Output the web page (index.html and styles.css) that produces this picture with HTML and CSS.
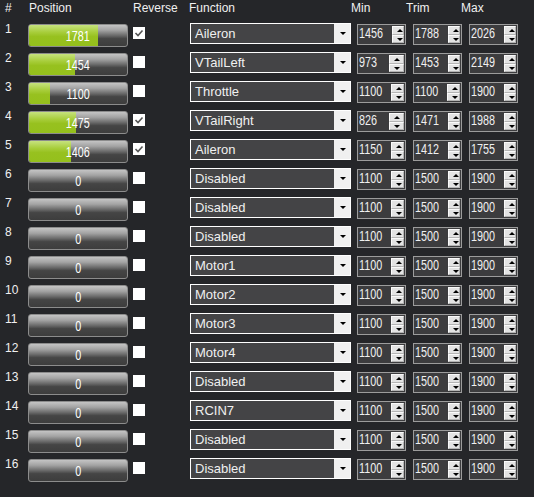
FILE: index.html
```html
<!DOCTYPE html>
<html lang="en">
<head>
    <meta charset="UTF-8">
    <title>Servo Output</title>
    <link rel="stylesheet" href="styles.css">
</head>
<body>
    <div class="panel">
        <div class="head">
            <span class="c-num">#</span>
            <span class="c-pos">Position</span>
            <span class="c-rev">Reverse</span>
            <span class="c-fn">Function</span>
            <span class="c-min">Min</span>
            <span class="c-trim">Trim</span>
            <span class="c-max">Max</span>
        </div>

        <div class="row">
            <span class="num">1</span>
            <div class="bar"><div class="fill" style="width: 70.1%"></div><span class="val"><b>1781</b></span></div>
            <span class="check on"></span>
            <div class="combo"><span class="text">Aileron</span><span class="drop"></span></div>
            <div class="spin"><span class="text"><b>1456</b></span><span class="btns"><i class="up"></i><i class="dn"></i></span></div>
            <div class="spin"><span class="text"><b>1788</b></span><span class="btns"><i class="up"></i><i class="dn"></i></span></div>
            <div class="spin"><span class="text"><b>2026</b></span><span class="btns"><i class="up"></i><i class="dn"></i></span></div>
        </div>
        <div class="row">
            <span class="num">2</span>
            <div class="bar"><div class="fill" style="width: 46.7%"></div><span class="val"><b>1454</b></span></div>
            <span class="check"></span>
            <div class="combo"><span class="text">VTailLeft</span><span class="drop"></span></div>
            <div class="spin"><span class="text"><b>973</b></span><span class="btns"><i class="up"></i><i class="dn"></i></span></div>
            <div class="spin"><span class="text"><b>1453</b></span><span class="btns"><i class="up"></i><i class="dn"></i></span></div>
            <div class="spin"><span class="text"><b>2149</b></span><span class="btns"><i class="up"></i><i class="dn"></i></span></div>
        </div>
        <div class="row">
            <span class="num">3</span>
            <div class="bar"><div class="fill" style="width: 21.4%"></div><span class="val"><b>1100</b></span></div>
            <span class="check"></span>
            <div class="combo"><span class="text">Throttle</span><span class="drop"></span></div>
            <div class="spin"><span class="text"><b>1100</b></span><span class="btns"><i class="up"></i><i class="dn"></i></span></div>
            <div class="spin"><span class="text"><b>1100</b></span><span class="btns"><i class="up"></i><i class="dn"></i></span></div>
            <div class="spin"><span class="text"><b>1900</b></span><span class="btns"><i class="up"></i><i class="dn"></i></span></div>
        </div>
        <div class="row">
            <span class="num">4</span>
            <div class="bar"><div class="fill" style="width: 48.2%"></div><span class="val"><b>1475</b></span></div>
            <span class="check on"></span>
            <div class="combo"><span class="text">VTailRight</span><span class="drop"></span></div>
            <div class="spin"><span class="text"><b>826</b></span><span class="btns"><i class="up"></i><i class="dn"></i></span></div>
            <div class="spin"><span class="text"><b>1471</b></span><span class="btns"><i class="up"></i><i class="dn"></i></span></div>
            <div class="spin"><span class="text"><b>1988</b></span><span class="btns"><i class="up"></i><i class="dn"></i></span></div>
        </div>
        <div class="row">
            <span class="num">5</span>
            <div class="bar"><div class="fill" style="width: 43.3%"></div><span class="val"><b>1406</b></span></div>
            <span class="check on"></span>
            <div class="combo"><span class="text">Aileron</span><span class="drop"></span></div>
            <div class="spin"><span class="text"><b>1150</b></span><span class="btns"><i class="up"></i><i class="dn"></i></span></div>
            <div class="spin"><span class="text"><b>1412</b></span><span class="btns"><i class="up"></i><i class="dn"></i></span></div>
            <div class="spin"><span class="text"><b>1755</b></span><span class="btns"><i class="up"></i><i class="dn"></i></span></div>
        </div>
        <div class="row">
            <span class="num">6</span>
            <div class="bar"><span class="val"><b>0</b></span></div>
            <span class="check"></span>
            <div class="combo"><span class="text">Disabled</span><span class="drop"></span></div>
            <div class="spin"><span class="text"><b>1100</b></span><span class="btns"><i class="up"></i><i class="dn"></i></span></div>
            <div class="spin"><span class="text"><b>1500</b></span><span class="btns"><i class="up"></i><i class="dn"></i></span></div>
            <div class="spin"><span class="text"><b>1900</b></span><span class="btns"><i class="up"></i><i class="dn"></i></span></div>
        </div>
        <div class="row">
            <span class="num">7</span>
            <div class="bar"><span class="val"><b>0</b></span></div>
            <span class="check"></span>
            <div class="combo"><span class="text">Disabled</span><span class="drop"></span></div>
            <div class="spin"><span class="text"><b>1100</b></span><span class="btns"><i class="up"></i><i class="dn"></i></span></div>
            <div class="spin"><span class="text"><b>1500</b></span><span class="btns"><i class="up"></i><i class="dn"></i></span></div>
            <div class="spin"><span class="text"><b>1900</b></span><span class="btns"><i class="up"></i><i class="dn"></i></span></div>
        </div>
        <div class="row">
            <span class="num">8</span>
            <div class="bar"><span class="val"><b>0</b></span></div>
            <span class="check"></span>
            <div class="combo"><span class="text">Disabled</span><span class="drop"></span></div>
            <div class="spin"><span class="text"><b>1100</b></span><span class="btns"><i class="up"></i><i class="dn"></i></span></div>
            <div class="spin"><span class="text"><b>1500</b></span><span class="btns"><i class="up"></i><i class="dn"></i></span></div>
            <div class="spin"><span class="text"><b>1900</b></span><span class="btns"><i class="up"></i><i class="dn"></i></span></div>
        </div>
        <div class="row">
            <span class="num">9</span>
            <div class="bar"><span class="val"><b>0</b></span></div>
            <span class="check"></span>
            <div class="combo"><span class="text">Motor1</span><span class="drop"></span></div>
            <div class="spin"><span class="text"><b>1100</b></span><span class="btns"><i class="up"></i><i class="dn"></i></span></div>
            <div class="spin"><span class="text"><b>1500</b></span><span class="btns"><i class="up"></i><i class="dn"></i></span></div>
            <div class="spin"><span class="text"><b>1900</b></span><span class="btns"><i class="up"></i><i class="dn"></i></span></div>
        </div>
        <div class="row">
            <span class="num">10</span>
            <div class="bar"><span class="val"><b>0</b></span></div>
            <span class="check"></span>
            <div class="combo"><span class="text">Motor2</span><span class="drop"></span></div>
            <div class="spin"><span class="text"><b>1100</b></span><span class="btns"><i class="up"></i><i class="dn"></i></span></div>
            <div class="spin"><span class="text"><b>1500</b></span><span class="btns"><i class="up"></i><i class="dn"></i></span></div>
            <div class="spin"><span class="text"><b>1900</b></span><span class="btns"><i class="up"></i><i class="dn"></i></span></div>
        </div>
        <div class="row">
            <span class="num">11</span>
            <div class="bar"><span class="val"><b>0</b></span></div>
            <span class="check"></span>
            <div class="combo"><span class="text">Motor3</span><span class="drop"></span></div>
            <div class="spin"><span class="text"><b>1100</b></span><span class="btns"><i class="up"></i><i class="dn"></i></span></div>
            <div class="spin"><span class="text"><b>1500</b></span><span class="btns"><i class="up"></i><i class="dn"></i></span></div>
            <div class="spin"><span class="text"><b>1900</b></span><span class="btns"><i class="up"></i><i class="dn"></i></span></div>
        </div>
        <div class="row">
            <span class="num">12</span>
            <div class="bar"><span class="val"><b>0</b></span></div>
            <span class="check"></span>
            <div class="combo"><span class="text">Motor4</span><span class="drop"></span></div>
            <div class="spin"><span class="text"><b>1100</b></span><span class="btns"><i class="up"></i><i class="dn"></i></span></div>
            <div class="spin"><span class="text"><b>1500</b></span><span class="btns"><i class="up"></i><i class="dn"></i></span></div>
            <div class="spin"><span class="text"><b>1900</b></span><span class="btns"><i class="up"></i><i class="dn"></i></span></div>
        </div>
        <div class="row">
            <span class="num">13</span>
            <div class="bar"><span class="val"><b>0</b></span></div>
            <span class="check"></span>
            <div class="combo"><span class="text">Disabled</span><span class="drop"></span></div>
            <div class="spin"><span class="text"><b>1100</b></span><span class="btns"><i class="up"></i><i class="dn"></i></span></div>
            <div class="spin"><span class="text"><b>1500</b></span><span class="btns"><i class="up"></i><i class="dn"></i></span></div>
            <div class="spin"><span class="text"><b>1900</b></span><span class="btns"><i class="up"></i><i class="dn"></i></span></div>
        </div>
        <div class="row">
            <span class="num">14</span>
            <div class="bar"><span class="val"><b>0</b></span></div>
            <span class="check"></span>
            <div class="combo"><span class="text">RCIN7</span><span class="drop"></span></div>
            <div class="spin"><span class="text"><b>1100</b></span><span class="btns"><i class="up"></i><i class="dn"></i></span></div>
            <div class="spin"><span class="text"><b>1500</b></span><span class="btns"><i class="up"></i><i class="dn"></i></span></div>
            <div class="spin"><span class="text"><b>1900</b></span><span class="btns"><i class="up"></i><i class="dn"></i></span></div>
        </div>
        <div class="row">
            <span class="num">15</span>
            <div class="bar"><span class="val"><b>0</b></span></div>
            <span class="check"></span>
            <div class="combo"><span class="text">Disabled</span><span class="drop"></span></div>
            <div class="spin"><span class="text"><b>1100</b></span><span class="btns"><i class="up"></i><i class="dn"></i></span></div>
            <div class="spin"><span class="text"><b>1500</b></span><span class="btns"><i class="up"></i><i class="dn"></i></span></div>
            <div class="spin"><span class="text"><b>1900</b></span><span class="btns"><i class="up"></i><i class="dn"></i></span></div>
        </div>
        <div class="row">
            <span class="num">16</span>
            <div class="bar"><span class="val"><b>0</b></span></div>
            <span class="check"></span>
            <div class="combo"><span class="text">Disabled</span><span class="drop"></span></div>
            <div class="spin"><span class="text"><b>1100</b></span><span class="btns"><i class="up"></i><i class="dn"></i></span></div>
            <div class="spin"><span class="text"><b>1500</b></span><span class="btns"><i class="up"></i><i class="dn"></i></span></div>
            <div class="spin"><span class="text"><b>1900</b></span><span class="btns"><i class="up"></i><i class="dn"></i></span></div>
        </div>
    </div>
</body>
</html>
```

FILE: styles.css
```css
body {
    margin: 0;
    background-color: #252629;
    color: #f0f0f0;
    font-family: "Liberation Sans", Arial, sans-serif;
}
.panel {
    width: 534px;
    height: 497px;
}
.head {
    display: flex;
    height: 20px;
    font-size: 12px;
    line-height: 17px;
}
.head span {
    display: block;
}
.c-num { width: 29px; padding-left: 5px; box-sizing: border-box; }
.c-pos { width: 104px; }
.c-rev { width: 56px; }
.c-fn { width: 162px; }
.c-min { width: 55px; }
.c-trim { width: 55px; }

.row {
    display: flex;
    align-items: flex-start;
    height: 29px;
}
.num {
    width: 28px;
    padding-left: 5px;
    box-sizing: border-box;
    font-size: 12px;
    line-height: 14px;
    margin-top: 2px;
}

/* narrow digits, like the app's condensed font */
b {
    display: inline-block;
    font-weight: normal;
    transform: scaleX(0.72);
}

.bar {
    position: relative;
    width: 100px;
    height: 23px;
    margin-top: 4px;
    box-sizing: border-box;
    border: 1px solid #8c8c8c;
    border-radius: 3px;
    overflow: hidden;
    background: linear-gradient(#c4c4c4, #a3a3a3 25%, #6a6a6a 50%, #454545 65%, #3d3d3d);
}
.fill {
    height: 100%;
    background: linear-gradient(#c6e27e, #a7cd3a 35%, #97c11f 55%, #95c01c);
}
.val {
    position: absolute;
    left: 0;
    right: 0;
    top: 2px;
    text-align: center;
    font-size: 15px;
    line-height: 17px;
    color: #ffffff;
}
.check {
    width: 12px;
    height: 12px;
    margin: 7px 0 0 5px;
    background: #ffffff;
}
.check.on {
    background: #ffffff url("data:image/svg+xml,%3Csvg xmlns='http://www.w3.org/2000/svg' width='12' height='12'%3E%3Cpath d='M2.5 6l2.5 2.5 4.5-5' fill='none' stroke='%23555' stroke-width='1.6'/%3E%3C/svg%3E");
}
.combo {
    display: flex;
    width: 161px;
    height: 21px;
    margin: 3px 0 0 45px;
    box-sizing: border-box;
    border: 1px solid #ffffff;
    background: #444446;
}
.combo .text {
    flex: 1;
    padding-left: 4px;
    font-size: 13px;
    line-height: 19px;
}
.drop {
    width: 16px;
    background: #f0f0f0;
    position: relative;
}
.drop::after {
    content: "";
    position: absolute;
    left: 6px;
    top: 8px;
    border-left: 3px solid transparent;
    border-right: 3px solid transparent;
    border-top: 3px solid #000;
}
.spin {
    display: flex;
    width: 49px;
    height: 21px;
    margin: 4px 0 0 6px;
    box-sizing: border-box;
    border: 1px solid #9c9c9c;
    background: #3c3c3e;
}
.spin + .spin {
    margin-left: 7px;
}
.spin .text {
    flex: 1;
    font-size: 15px;
    line-height: 16px;
    white-space: nowrap;
}
.spin .text b {
    transform-origin: left;
    margin-left: 1px;
}
.btns {
    display: flex;
    flex-direction: column;
    width: 15px;
    margin: 1px 1px 1px 0;
}
.btns i {
    flex: 1;
    position: relative;
    background: #e3e3e3;
    border: 1px solid #b4b4b4;
    border-top-color: #fafafa;
    border-left-color: #fafafa;
}
.btns i::after {
    content: "";
    position: absolute;
    left: 4px;
    top: 2px;
    border-left: 3px solid transparent;
    border-right: 3px solid transparent;
}
.btns .up::after {
    border-bottom: 3px solid #000;
}
.btns .dn::after {
    border-top: 3px solid #000;
}
```
